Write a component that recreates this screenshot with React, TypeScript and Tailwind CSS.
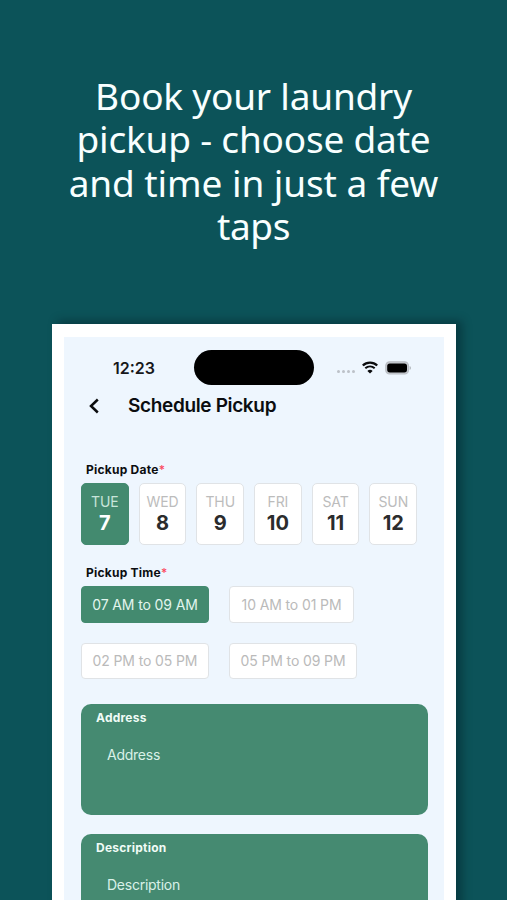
const headline = [
  { text: 'Book your laundry', tracking: 'tracking-[-0.2px]' },
  { text: 'pickup - choose date', tracking: 'tracking-[-0.2px]' },
  { text: 'and time in just a few', tracking: 'tracking-[-0.08px]' },
  { text: 'taps', tracking: 'tracking-[-0.4px]' },
];

const days = [
  { name: 'TUE', date: '7' },
  { name: 'WED', date: '8' },
  { name: 'THU', date: '9' },
  { name: 'FRI', date: '10' },
  { name: 'SAT', date: '11' },
  { name: 'SUN', date: '12' },
];

const slots = [
  { label: '07 AM to 09 AM', width: 'w-[128px]' },
  { label: '10 AM to 01 PM', width: 'w-[125px]' },
  { label: '02 PM to 05 PM', width: 'w-[128px]' },
  { label: '05 PM to 09 PM', width: 'w-[128px]' },
];

function StatusBar() {
  return (
    <div className="flex h-[35px] items-center pl-[49px]">
      <span className="w-[81px] text-[16px] leading-[20px] font-semibold text-[#16181b]">12:23</span>
      <div className="h-[35px] w-[120px] rounded-full bg-black" />
      <div className="mt-[8px] ml-[23px] flex gap-[2px]">
        {[0, 1, 2, 3].map((i) => (
          <i key={i} className="size-[3px] rounded-full bg-[#bcc1c8]" />
        ))}
      </div>
      <svg className="ml-[7px]" width="16" height="13" viewBox="0 0 16 13" fill="none" stroke="#0b0c0e">
        <path d="M.8 4.500C4.800.6 11.200.6 15.200 4.500" strokeWidth="2.3" />
        <path d="M3.300 7.300C6 4.900 10 4.900 12.700 7.300" strokeWidth="2.1" />
        <path d="M8 12.500 5.400 9.900C6.900 8.500 9.100 8.500 10.600 9.900Z" fill="#0b0c0e" stroke="none" />
      </svg>
      <svg className="ml-[7px]" width="27" height="14" viewBox="0 0 27 14">
        <rect x=".8" y=".8" width="22.6" height="12.2" rx="3.8" fill="#c6cad0" stroke="#b9bdc3" strokeWidth="1.200" />
        <rect x="2.200" y="2.500" width="19.800" height="8.900" rx="2.600" fill="#000" />
        <path d="M24.600 5v4c1.800-.7 1.800-3.300 0-4Z" fill="#aeb3b9" />
      </svg>
    </div>
  );
}

function FieldLabel({ children }: { children: string }) {
  return (
    <div className="pl-[5px] text-[12px] leading-[16px] font-bold tracking-[0.24px] text-[#0b0d10]">
      {children}
      <span className="font-medium text-[#fb4960]">*</span>
    </div>
  );
}

function TextCard({ title }: { title: string }) {
  return (
    <div className="h-[111px] w-[346.500px] shrink-0 rounded-[10px] bg-[#458a71] pt-[5px] pl-[15px]">
      <div className="text-[12px] leading-[17px] font-bold tracking-[0.24px] text-[#f0fcf7]">{title}</div>
      <div className="mt-[19px] pl-[11px] text-[14px] leading-[20px] tracking-[-0.25px] text-[#d9f1e8]">{title}</div>
    </div>
  );
}

export default function App() {
  return (
    <main className="flex h-[900px] w-[507px] flex-col overflow-hidden bg-[#0c5359] font-['Inter',sans-serif]">
      <h1 className="flex h-[324px] shrink-0 flex-col items-center pt-[74px] font-['Noto_Sans',sans-serif] text-[37px] leading-[43.300px] font-[450] text-[#f8ffff]">
        {headline.map((line) => (
          <span key={line.text} className={`whitespace-nowrap ${line.tracking}`}>{line.text}</span>
        ))}
      </h1>
      <section className="ml-[52px] h-[620px] w-[404px] shrink-0 border-x-[12px] border-t-[13px] border-white bg-[#eef6fe] pt-[13px] shadow-[6px_-3px_9px_rgba(0,25,30,0.42)]">
        <StatusBar />
        <header className="mt-[9px] flex h-[24px] items-center pl-[25px]">
          <svg width="11" height="16" viewBox="0 0 11 16" fill="none" stroke="#0b0c0e" strokeWidth="2.5">
            <path d="M8.800 1.500 2 8l6.800 6.500" />
          </svg>
          <h2 className="ml-[28px] text-[19px] leading-[24px] font-semibold tracking-[-0.35px] text-[#0b0d10]">Schedule Pickup</h2>
        </header>
        <div className="flex flex-col pt-[44px] pl-[17px]">
          <FieldLabel>Pickup Date</FieldLabel>
          <div className="mt-[5px] flex gap-[10px]">
            {days.map((d, i) => (
              <div
                key={d.name}
                className={`flex h-[62px] w-[47.700px] flex-col items-center rounded-[5px] border pt-[8px] ${
                  i === 0 ? 'border-[#438a6f] bg-[#438a6f]' : 'border-[#e0e3e6] bg-white'
                }`}
              >
                <span className={`text-[14px] leading-[20px] tracking-[-0.1px] ${i === 0 ? 'text-[#c8e5da]' : 'text-[#bcbcbc]'}`}>{d.name}</span>
                <span className={`text-[20px] leading-[22px] font-bold ${i === 0 ? 'text-white' : 'text-[#2b2c2d]'}`}>{d.date}</span>
              </div>
            ))}
          </div>
          <div className="mt-[20px]">
            <FieldLabel>Pickup Time</FieldLabel>
          </div>
          <div className="mt-[5px] grid grid-cols-[148px_128px] gap-y-[20px]">
            {slots.map((s, i) => (
              <div
                key={s.label}
                className={`flex h-[36.500px] items-center justify-center rounded-[4px] border text-[14px] tracking-[-0.12px] whitespace-nowrap ${s.width} ${
                  i === 0 ? 'border-[#438a6f] bg-[#438a6f] text-[#e2f5ee]' : 'border-[#e0e3e6] bg-white text-[#bababa]'
                }`}
              >
                {s.label}
              </div>
            ))}
          </div>
          <div className="mt-[25px] flex flex-col gap-[19px]">
            <TextCard title="Address" />
            <TextCard title="Description" />
          </div>
        </div>
      </section>
    </main>
  );
}
